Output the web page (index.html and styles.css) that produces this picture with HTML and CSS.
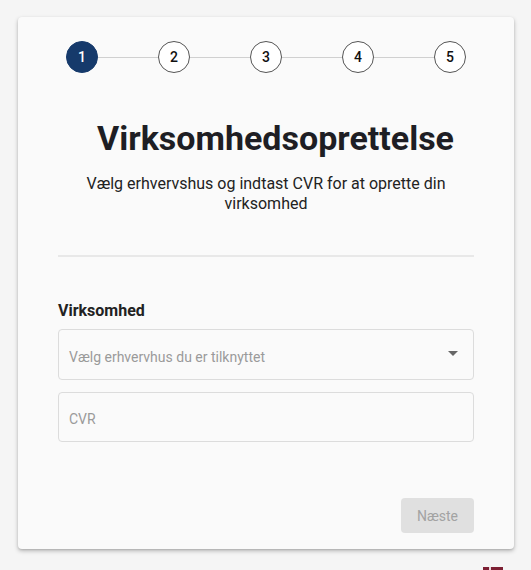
FILE: index.html
```html
<!DOCTYPE html>
<html lang="da">
<head>
<meta charset="utf-8">
<link rel="stylesheet" href="styles.css">
</head>
<body>
<div class="page">
  <div class="card">
    <div class="stepper">
      <div class="step active">1</div>
      <div class="line"></div>
      <div class="step">2</div>
      <div class="line"></div>
      <div class="step">3</div>
      <div class="line"></div>
      <div class="step">4</div>
      <div class="line"></div>
      <div class="step">5</div>
    </div>
    <h1 class="title">Virksomhedsoprettelse</h1>
    <p class="subtitle">Vælg erhvervshus og indtast CVR for at oprette din virksomhed</p>
    <hr class="divider">
    <div class="label">Virksomhed</div>
    <div class="field select">
      <span class="placeholder">Vælg erhvervhus du er tilknyttet</span>
      <span class="arrow"></span>
    </div>
    <div class="field">
      <span class="placeholder">CVR</span>
    </div>
    <div class="actions">
      <button class="btn" disabled>Næste</button>
    </div>
  </div>
  <svg class="flag" width="20" height="14" viewBox="0 0 20 14"><rect width="20" height="14" fill="#7c1f33"/><rect x="6" width="2" height="14" fill="#e8d8dc"/><rect y="6" width="20" height="2" fill="#e8d8dc"/></svg>
</div>
</body>
</html>
```
FILE: styles.css
```css
* { box-sizing: border-box; }
html, body { margin: 0; padding: 0; }
body {
  background: #f5f5f5;
  font-family: Roboto, "Liberation Sans", sans-serif;
  color: #222;
  width: 531px;
  height: 570px;
  overflow: hidden;
}
.page {
  padding: 17px 17px 0 18px;
  position: relative;
  height: 570px;
}
.card {
  width: 496px;
  height: 532px;
  background: #fafafa;
  border-radius: 4px;
  box-shadow: 0 2px 4px rgba(0,0,0,0.25), 0 1px 2px rgba(0,0,0,0.1);
  padding: 24px 40px 0 40px;
}
.stepper {
  display: flex;
  align-items: center;
  padding: 0 8px;
}
.step {
  width: 32px;
  height: 32px;
  border-radius: 50%;
  border: 1px solid #555;
  background: #fff;
  display: flex;
  align-items: center;
  justify-content: center;
  font-size: 14px;
  font-weight: 500;
  color: #111;
  flex: none;
}
.step.active {
  background: #163a6b;
  border-color: #163a6b;
  color: #fff;
}
.line {
  flex: 1;
  height: 1px;
  background: #d0d0d0;
}
.title {
  margin: 41px 0 0 19px;
  font-size: 34px;
  font-weight: 700;
  text-align: center;
  color: #1e1e24;
  line-height: 48px;
}
.subtitle {
  margin: 12px 20px 0;
  font-size: 16px;
  line-height: 20px;
  text-align: center;
  color: #222;
}
.divider {
  margin: 41px 0 0;
  border: none;
  height: 2px;
  background: #e8e8e8;
}
.label {
  margin-top: 44px;
  font-size: 16px;
  font-weight: 700;
  color: #222;
  line-height: 20px;
}
.field {
  margin-top: 8px;
  height: 51px;
  border: 1px solid #dcdcdc;
  border-radius: 4px;
  background: #fafafa;
  display: flex;
  align-items: center;
  padding: 4px 10px 0;
  position: relative;
}
.field + .field { margin-top: 12px; height: 50px; }
.placeholder {
  font-size: 14px;
  color: #9a9a9a;
  flex: 1;
}
.arrow {
  width: 0;
  height: 0;
  border-left: 5px solid transparent;
  border-right: 5px solid transparent;
  border-top: 5px solid #666;
  margin-right: 5px;
  margin-top: -7px;
}
.actions {
  display: flex;
  justify-content: flex-end;
  margin-top: 56px;
}
.btn {
  width: 73px;
  height: 35px;
  border: none;
  border-radius: 4px;
  background: #e0e0e0;
  color: #a3a3a3;
  font-family: Roboto, "Liberation Sans", sans-serif;
  font-size: 14px;
  padding: 0;
}
.flag {
  position: absolute;
  left: 483px;
  top: 567px;
  display: block;
}
```
